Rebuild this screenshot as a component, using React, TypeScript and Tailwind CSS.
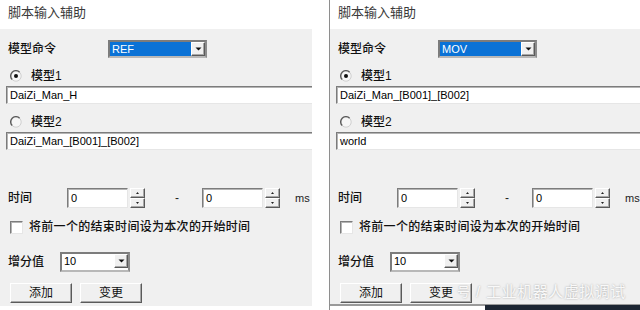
import type { ReactNode } from "react";

type PanelProps = {
  cmd: string;
  model1: string;
  model2: string;
  right?: boolean;
};

const sunken =
  "border border-t-[#7c7c7c] border-l-[#7c7c7c] border-b-[#e6e6e6] border-r-[#e6e6e6] shadow-[inset_1px_1px_0_#b4b4b4]";
const raised =
  "border border-t-[#ffffff] border-l-[#ffffff] border-b-[#5a5a5a] border-r-[#5a5a5a] shadow-[inset_-1px_-1px_0_#a8a8a8]";

function DownArrow() {
  return (
    <svg width="7" height="4" viewBox="0 0 7 4">
      <path d="M0.5 0.5 L6.5 0.5 L3.5 3.5 Z" fill="#111" />
    </svg>
  );
}

function Combo({ value, width, selected }: { value: string; width: string; selected?: boolean }) {
  return (
    <div className={`flex h-[18px] bg-white border-2 border-t-[#7c7c7c] border-l-[#7c7c7c] border-b-[#b8b8b8] border-r-[#8c8c8c] ${width}`}>
      <div
        className={`flex-1 pl-[2px] text-[11px] leading-[14px] ${
          selected ? "bg-[#0a72d6] text-white" : "bg-white text-black"
        }`}
      >
        {value}
      </div>
      <div className={`w-[14px] h-[14px] flex items-center justify-center bg-[#f0f0f0] ${raised}`}>
        <DownArrow />
      </div>
    </div>
  );
}

function Radio({ checked, label }: { checked?: boolean; label: ReactNode }) {
  return (
    <div className="flex items-center h-[16px] pl-[4px]">
      <svg width="12" height="12" viewBox="0 0 12 12">
        <circle cx="6" cy="6" r="5.2" fill="#f7f7f7" stroke="#d0d0d0" />
        <path d="M2.2 9.6 A5.2 5.2 0 0 1 9.6 2.2" fill="none" stroke="#5c5c5c" strokeWidth="1.4" />
        {checked && <circle cx="6" cy="6" r="2" fill="#111" />}
      </svg>
      <span className="ml-[9px] text-[12px] font-medium text-[#111]">{label}</span>
    </div>
  );
}

function Spin({ value }: { value: string }) {
  return (
    <div className="flex items-center">
      <div className={`w-[61px] h-[20px] bg-white pl-[3px] text-[11px] leading-[18px] ${sunken}`}>{value}</div>
      <div className="ml-[2px] flex flex-col w-[15px] h-[20px]">
        <div className={`h-[10px] flex items-center justify-center bg-[#f0f0f0] ${raised}`}>
          <svg width="3" height="2" viewBox="0 0 3 2">
            <path d="M0 2 L3 2 L1.5 0 Z" fill="#222" />
          </svg>
        </div>
        <div className={`h-[10px] flex items-center justify-center bg-[#f0f0f0] ${raised}`}>
          <svg width="3" height="2" viewBox="0 0 3 2">
            <path d="M0 0 L3 0 L1.5 2 Z" fill="#222" />
          </svg>
        </div>
      </div>
    </div>
  );
}

function Btn({ text }: { text: string }) {
  return (
    <div
      className={`w-[62px] h-[20px] flex items-center justify-center bg-[#f0f0f0] text-[12px] text-[#111] ${raised}`}
    >
      {text}
    </div>
  );
}

function Panel({ cmd, model1, model2, right }: PanelProps) {
  return (
    <div
      className={`flex flex-col overflow-hidden ${
        right ? "flex-1 border-l border-[#8e8e8e]" : "w-[312px] flex-none"
      }`}
    >
      <div className="h-[29px] bg-white pt-[5px] pl-[8px] text-[13px] leading-[16px] text-[#3a3a3a]">
        脚本输入辅助
      </div>
      <div
        className={`bg-[#f0f0f0] flex flex-col pl-[6px] h-[277px] ${
          right ? "border-b-2 border-[#9a9a9a]" : ""
        }`}
      >
        <div className="mt-[11px] h-[18px] flex items-center">
          <span className="w-[102px] pl-[2px] text-[12px] font-medium text-[#111]">模型命令</span>
          <Combo value={cmd} width="w-[99px]" selected />
        </div>
        <div className="mt-[10px]">
          <Radio checked label="模型1" />
        </div>
        <div className={`mt-[2px] h-[18px] w-[330px] bg-white pl-[3px] text-[11px] leading-[16px] text-black ${sunken}`}>
          {model1}
        </div>
        <div className="mt-[10px]">
          <Radio label="模型2" />
        </div>
        <div className={`mt-[2px] h-[18px] w-[330px] bg-white pl-[3px] text-[11px] leading-[16px] text-black ${sunken}`}>
          {model2}
        </div>
        <div className="mt-[38px] h-[20px] flex items-center">
          <span className="w-[61px] pl-[2px] text-[12px] font-medium text-[#111]">时间</span>
          <Spin value="0" />
          <span className="w-[57px] pl-[30px] text-[12px] text-[#222]">-</span>
          <Spin value="0" />
          <span className="ml-[15px] text-[11px] text-[#222]">ms</span>
        </div>
        <div className="mt-[11px] h-[16px] flex items-center pl-[4px]">
          <div className={`w-[13px] h-[13px] bg-white ${sunken}`} />
          <span className="ml-[6px] text-[12px] font-medium tracking-[0.3px] text-[#111]">
            将前一个的结束时间设为本次的开始时间
          </span>
        </div>
        <div className="mt-[17px] h-[20px] flex items-center">
          <span className="w-[54px] pl-[2px] text-[12px] font-medium text-[#111]">增分值</span>
          <Combo value="10" width="w-[70px] h-[20px]" />
        </div>
        <div className="mt-[11px] h-[20px] flex items-center gap-[8px] pl-[4px]">
          <Btn text="添加" />
          <Btn text="变更" />
        </div>
      </div>
    </div>
  );
}

export default function App() {
  return (
    <div
      className="relative w-[640px] h-[310px] bg-white flex overflow-hidden"
      style={{ fontFamily: '"Liberation Sans", "Noto Sans CJK SC", sans-serif' }}
    >
      <Panel cmd="REF" model1="DaiZi_Man_H" model2="DaiZi_Man_[B001]_[B002]" />
      <div className="w-[17px] flex-none" />
      <Panel right cmd="MOV" model1="DaiZi_Man_[B001]_[B002]" model2="world" />

      {/* watermark */}
      <div className="absolute left-[485px] bottom-0 w-[155px] h-[5px] bg-[#1d2633]" />
      <div className="absolute left-[457px] top-[282px] flex items-center text-[15px] leading-[20px] text-white/90 [text-shadow:0_0_2px_rgba(0,0,0,0.35)]">
        <span className="text-[13px]">号</span>
        <span className="ml-[6px]">/</span>
        <span className="ml-[6px] tracking-[0.5px]">工业机器人虚拟调试</span>
      </div>
    </div>
  );
}
